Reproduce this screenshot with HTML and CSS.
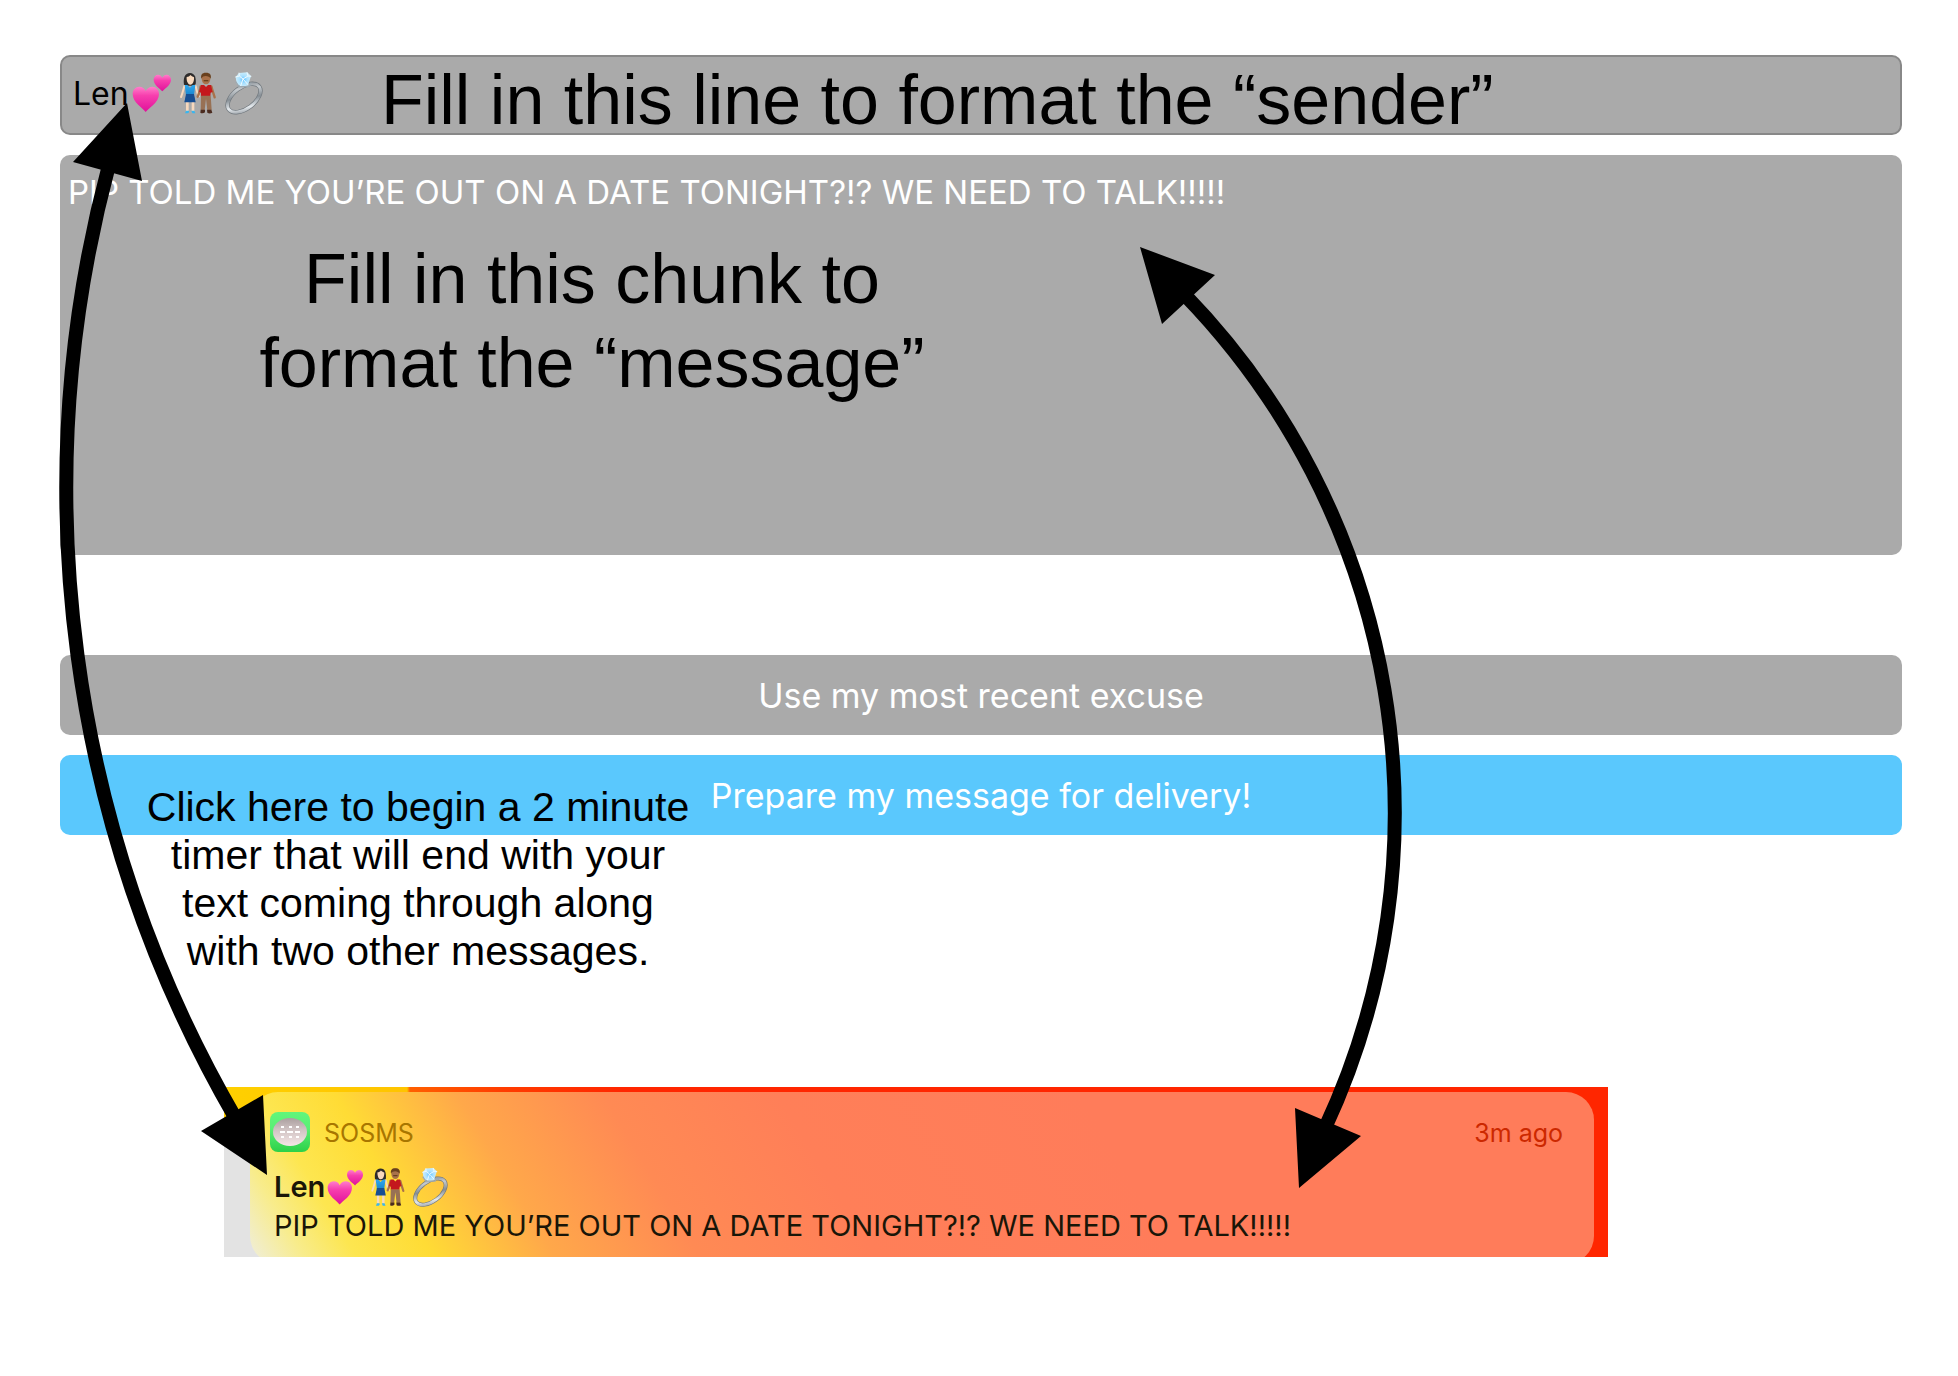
FILE: index.html
```html
<!DOCTYPE html>
<html lang="en">
<head>
<meta charset="utf-8">
<meta name="viewport" content="width=device-width, initial-scale=1">
<title>SOSMS</title>
<link rel="stylesheet" href="styles.css">
</head>
<body>
<svg class="defs" width="0" height="0" aria-hidden="true">
  <defs>
    <linearGradient id="pink" x1="0" y1="0" x2="0" y2="1">
      <stop offset="0" stop-color="#ff7fcb"/><stop offset=".35" stop-color="#f73fae"/><stop offset="1" stop-color="#e0109a"/>
    </linearGradient>
    <linearGradient id="dress" x1="0" y1="0" x2="0" y2="1">
      <stop offset="0" stop-color="#2fa8ee"/><stop offset="1" stop-color="#1a86cf"/>
    </linearGradient>
    <linearGradient id="silver" x1="0" y1="1" x2="1" y2="0">
      <stop offset="0" stop-color="#7b8289"/><stop offset=".25" stop-color="#e4e9ed"/><stop offset=".5" stop-color="#858d94"/><stop offset=".75" stop-color="#c5cace"/><stop offset="1" stop-color="#6c737a"/>
    </linearGradient>
    <radialGradient id="gem">
      <stop offset="0" stop-color="#5cc0ff"/><stop offset=".5" stop-color="#a9e0ff"/><stop offset="1" stop-color="#c9ecfb"/>
    </radialGradient>
    <linearGradient id="green" x1="0" y1="0" x2="0" y2="1">
      <stop offset="0" stop-color="#62f57b"/><stop offset=".4" stop-color="#5af075"/><stop offset="1" stop-color="#2dd048"/>
    </linearGradient>
    <linearGradient id="bubble" x1="0" y1="0" x2="0" y2="1">
      <stop offset="0" stop-color="#aa9f9f"/><stop offset=".4" stop-color="#cfc2c2"/><stop offset="1" stop-color="#f5e6e6"/>
    </linearGradient>
    <symbol id="emoji" viewBox="240 95 405 130">
      <path fill="url(#pink)" d="M287 217C279 205 248 189 248 163c0-13 9-22 20-22 9 0 16 5 19 13 4-8 11-13 20-13 12 0 20 9 20 22 0 26-31 42-40 54z"/>
      <path fill="url(#pink)" d="M337 155c-6-8-26-18-26-35 0-9 6-15 13-15 6 0 10 3 13 9 3-6 7-9 13-9 7 0 13 6 13 15 0 17-20 27-26 35z"/>
      <g>
        <path d="M402 135c-3-18 2-35 18-35 15 0 19 15 17 34l-8 4h-20z" fill="#2d2b2b"/>
        <path d="M410 112c5 0 9-3 11-6 4 4 8 5 11 7 1 10-3 22-11 22s-12-13-11-23z" fill="#f8d9bd"/>
        <path d="M403 139c-3 12-6 24-10 33M437 139c3 11 3 22 10 31" fill="none" stroke="#f8d9bd" stroke-width="6" stroke-linecap="round"/>
        <path d="M412 184v30M429 184v30" stroke="#f8d9bd" stroke-width="8"/>
        <path d="M404 136h8l8 8 8-8h8l-4 30h-24z" fill="url(#dress)"/>
        <path d="M408 163h24l5 25h-34z" fill="#174e92"/>
        <path d="M408 213h9v5l-3 3h-9zM424 213h9l3 8h-9z" fill="#39b6ef"/>
        <path d="M452 140c-3 12-4 22-9 31M484 140c3 12 7 22 10 33" fill="none" stroke="#a9714a" stroke-width="7" stroke-linecap="round"/>
        <ellipse cx="468" cy="117" rx="13" ry="17" fill="#a9714a"/>
        <path d="M454 117c-3-13 4-19 15-18 10 0 16 6 13 18-4-9-23-12-28 0z" fill="#69401e"/>
        <path d="M461 123h14" stroke="#69401e" stroke-width="4"/>
        <path d="M453 136h9l6 6 6-6h9l5 21-6 2-1 10h-28v-10l-6-3z" fill="#c4181d"/>
        <path d="M453 168h29l3 43h-13l-4-34-4 34h-12z" fill="#987154"/>
        <path d="M452 210h13v8c-5 4-11 3-14 1zM471 210h13l3 9c-5 3-11 3-15 0z" fill="#4b2c20"/>
      </g>
      <ellipse cx="582" cy="175" rx="57" ry="32" transform="rotate(-37 582 175)" fill="none" stroke="#70777d" stroke-width="13"/>
      <ellipse cx="582" cy="175" rx="57" ry="32" transform="rotate(-37 582 175)" fill="none" stroke="url(#silver)" stroke-width="9"/>
      <path d="M557 112l10-12 25-2 11 11-9 28-17 5-17-9z" fill="url(#gem)"/>
      <path d="M556 112l12-3 11 9 15-9 10 1M567 99l1 10M591 98l3 11M579 118l-7 21M579 118l15 17" fill="none" stroke="#eefaff" stroke-width="3"/>
      <path d="M557 126l10 15h30l7-12" fill="none" stroke="#9da8b0" stroke-width="4"/>
    </symbol>
  </defs>
</svg>

<main class="page">
  <form class="form" onsubmit="return false">
    <div class="field">
      <input class="sender" type="text" value="Len" aria-label="Sender">
      <svg class="emoji emoji-field" role="img" aria-label="two hearts, couple holding hands, ring"><use href="#emoji"/></svg>
      <p class="note note-sender">Fill in this line to format the “sender”</p>
    </div>
    <div class="field field-message">
      <textarea class="message" aria-label="Message">PIP TOLD ME YOU’RE OUT ON A DATE TONIGHT?!? WE NEED TO TALK!!!!!</textarea>
      <p class="note note-message">Fill in this chunk to format the “message”</p>
    </div>
    <button class="button" type="button">Use my most recent excuse</button>
    <div class="field">
      <button class="button button-primary" type="submit">Prepare my message for delivery!</button>
      <p class="note note-timer">Click here to begin a 2 minute<br>timer that will end with your<br>text coming through along<br>with two other messages.</p>
    </div>
  </form>

  <section class="preview">
    <article class="card">
      <header class="card-head">
        <svg class="app-icon" viewBox="0 0 40 40" aria-hidden="true">
          <rect width="40" height="40" rx="8" fill="url(#green)"/>
          <ellipse cx="20" cy="20" rx="17" ry="14" fill="url(#bubble)"/>
          <path d="M11 15h3M19 15h3M26 15h3M11 25h3M19 25h3M26 25h3M10 20h5M17 20h6M25 20h5" stroke="#fff" stroke-width="2"/>
        </svg>
        <span class="app-name">SOSMS</span>
        <time class="ago">3m ago</time>
      </header>
      <h2 class="card-title">Len<svg class="emoji emoji-card" role="img" aria-label="two hearts, couple holding hands, ring"><use href="#emoji"/></svg></h2>
      <p class="card-text">PIP TOLD ME YOU’RE OUT ON A DATE TONIGHT?!? WE NEED TO TALK!!!!!</p>
    </article>
  </section>

  <svg class="arrows" viewBox="0 0 1958 1376" aria-hidden="true">
    <g fill="none" stroke="#000" stroke-width="14">
      <path d="M109 165A1255 1255 0 0 0 236 1119"/>
      <path d="M1184 294A745 745 0 0 1 1325 1128"/>
    </g>
    <path d="M127 103L73 162l69 19zM267 1175l-66-44 62-36zM1140 247l75 28-53 49zM1299 1188l-4-80 66 28z"/>
  </svg>
</main>
</body>
</html>
```
FILE: styles.css
```css
* {
  box-sizing: border-box;
}

body {
  margin: 0;
  background: #fff;
  color: #000;
  font-family: Inter, "Liberation Sans", sans-serif;
}

h2,
p {
  margin: 0;
}

.defs {
  position: absolute;
}

.page {
  position: relative;
  padding: 55px 56px 119px 60px;
}

/* Form */
.form {
  display: flex;
  flex-direction: column;
  gap: 20px;
}

.field {
  position: relative;
  display: flex;
}

.field-message {
  margin-bottom: 80px;
}

.sender,
.message,
.button {
  display: block;
  width: 100%;
  margin: 0;
  border: 0;
  border-radius: 10px;
  background: #aaa;
  font-family: inherit;
}

.sender {
  height: 80px;
  padding: 0 11px 4px;
  border: 2px solid #888;
  color: #000;
  font-size: 32px;
}

.message {
  height: 400px;
  padding: 17px 8px;
  color: #fff;
  font-size: 33px;
  line-height: 40px;
  resize: none;
}

.button {
  height: 80px;
  padding: 0;
  color: #fff;
  font-size: 34px;
  cursor: pointer;
}

.button-primary {
  background: #5ac8fd;
}

/* Emoji run that follows a name */
.emoji {
  width: 135px;
  height: 44px;
}

.emoji-field {
  position: absolute;
  top: 16px;
  left: 70px;
}

/* Hand-placed captions over the form */
.note {
  position: absolute;
  font-family: "Liberation Sans", Arial, sans-serif;
  text-align: center;
  pointer-events: none;
}

.note-sender {
  top: 5px;
  left: 321px;
  font-size: 70px;
  line-height: 80px;
  white-space: nowrap;
}

.note-message {
  top: 82px;
  left: 191px;
  width: 682px;
  font-size: 70px;
  line-height: 84px;
}

.note-timer {
  top: 28px;
  left: 80px;
  width: 556px;
  font-size: 41px;
  line-height: 48px;
}

/* Notification preview */
.preview {
  height: 170px;
  margin: 252px 294px 0 164px;
  padding: 5px 14px 0 26px;
  overflow: hidden;
  background:
    linear-gradient(#e3e3e3, #e3e3e3) 0 56px / 60px 100% no-repeat,
    linear-gradient(90deg, #ffd000 0, #ffc400 183px, #ff5f00 186px, #ff3c00 280px, #ff2600 400px);
}

.card {
  height: 172px;
  padding: 20px 31px 0 20px;
  border-radius: 28px;
  background: linear-gradient(59deg, #efeee0 0, #f8ec8c 50px, #fde650 95px, #ffdc35 160px, #ffa84a 265px, #ff8a54 390px, #ff7f58 540px, #ff7c5a 800px);
}

.card-head {
  display: flex;
  align-items: center;
  height: 40px;
  font-size: 25px;
}

.app-icon {
  width: 40px;
  height: 40px;
}

.app-name,
.ago {
  padding-top: 2px;
}

.app-name {
  margin-left: 14px;
  color: #a87600;
}

.ago {
  margin-left: auto;
  color: #cc2800;
}

.card-title {
  display: flex;
  align-items: center;
  margin: 14px 0 0 4px;
  color: #1a1608;
  font-size: 29px;
  font-weight: 600;
  line-height: 42px;
}

.emoji-card {
  width: 125px;
  height: 40px;
}

.card-text {
  margin-left: 4px;
  color: #1a1608;
  font-size: 29px;
  line-height: 36px;
  white-space: nowrap;
}

/* Arrows drawn across the whole page */
.arrows {
  position: absolute;
  top: 0;
  left: 0;
  width: 100%;
  height: auto;
  pointer-events: none;
}
```
